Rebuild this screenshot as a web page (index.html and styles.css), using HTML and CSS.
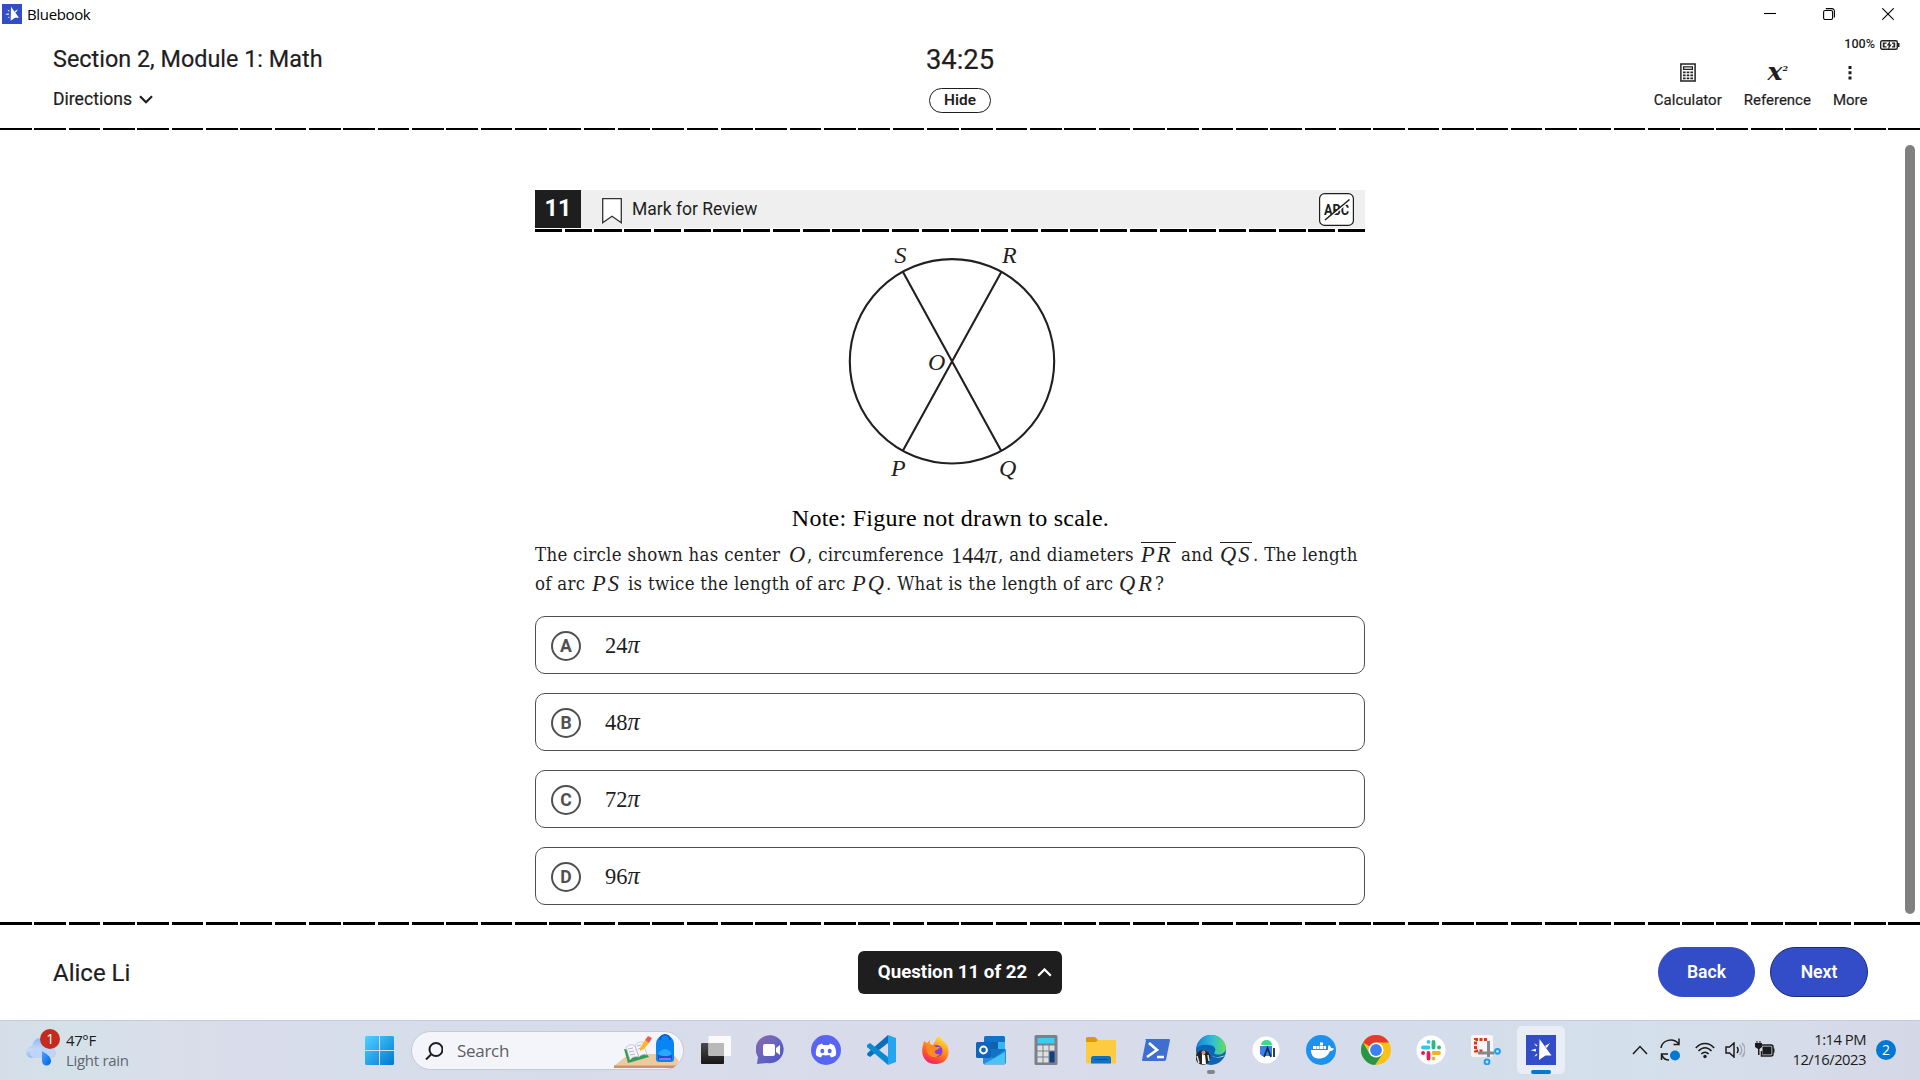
FILE: index.html
```html
<!DOCTYPE html>
<html lang="en">
<head>
<meta charset="utf-8">
<title>Bluebook</title>
<link rel="stylesheet" href="styles.css">
</head>
<body>
<div class="titlebar">
  <svg class="app-icon" viewBox="0 0 30 30"><rect width="30" height="30" fill="#324dc7"/><path d="M13.500 4l12 16.500h-6L13 25zM4.500 15.200l5.500-1.400v2.800zM7.800 8.300l3.700 2-1 1.200zM24 8l-3.300 5-1.700-2zM8 21.800l2.500-3 1 1.200z" fill="#fff"/></svg>
  <span class="app-name">Bluebook</span>
  <div class="window-buttons">
    <svg viewBox="0 0 12 12"><path d="M0 5.500h12"/></svg>
    <svg viewBox="0 0 12 12"><rect x=".6" y="2.500" width="9" height="9" rx="1.500"/><path d="M2.800.6H9a2.400 2.400 0 0 1 2.400 2.400v6.500"/></svg>
    <svg viewBox="0 0 12 12"><path d="M.3.3l11.400 11.400M11.700.3L.3 11.700"/></svg>
  </div>
</div>

<header class="header">
  <div class="header-left">
    <h1>Section 2, Module 1: Math</h1>
    <div class="directions">Directions <svg viewBox="0 0 14 9"><path d="M1 1.200l6 6 6-6"/></svg></div>
  </div>
  <div class="header-center">
    <div class="timer">34:25</div>
    <button class="hide">Hide</button>
  </div>
  <div class="header-right">
    <div class="power"><span>100%</span>
      <svg viewBox="0 0 20 10"><rect x=".7" y=".7" width="16.600" height="8.600" rx="1.500" fill="none" stroke="#222" stroke-width="1.400"/><path d="M18 3h1.500v4H18z" fill="#222"/><path d="M2.800 2.500h3.700v1.200H4.500v2.600h2v1.200H2.800zM12 2.500h3.200v5H12V6.300h1.500V3.700H12zM10.500 0L6.800 5.500h2L7.900 10l3.900-5.500H9.700z" fill="#222"/></svg>
    </div>
    <div class="tools">
      <div class="tool calc"><svg width="16" height="19" viewBox="0 0 16 19"><path d="M.9.9h14.200v17.200H.9z" fill="none" stroke="#222" stroke-width="1.500"/><path d="M3.600 3.800h8.800v2.500H3.600z" fill="none" stroke="#222" stroke-width="1.300"/><path d="M3 9.300h10M3 12.300h10M3 15.300h10" stroke="#222" stroke-width="1.700" stroke-dasharray="2.600 1.100"/></svg><span>Calculator</span></div>
      <div class="tool ref"><div class="xsq">x<sup>2</sup></div><span>Reference</span></div>
      <div class="tool more"><svg width="4" height="14" viewBox="0 0 4 14"><path d="M.5 0h3v3h-3zM.5 5.200h3v3h-3zM.5 10.400h3v3h-3z" fill="#1e1e1e"/></svg><span>More</span></div>
    </div>
  </div>
</header>
<svg class="rule rule-top" viewBox="0 0 1920 2"><path d="M0 1H1920"/></svg>

<main class="main">
  <article class="question">
    <div class="qbar">
      <div class="qnum">11</div>
      <svg class="bookmark" viewBox="0 0 20 26"><path d="M.7.700h18.600v24L10 18.200.700 24.700z"/></svg>
      <span class="mark">Mark for Review</span>
      <svg class="abc" viewBox="0 0 35 33"><rect x=".6" y=".6" width="33.800" height="31.800" rx="5" fill="#fff" stroke="#1e1e1e" stroke-width="1.200"/><text x="5" y="21.500" textLength="25" lengthAdjust="spacingAndGlyphs">ABC</text><path d="M7 27.500L31 7.500" stroke="#fff" stroke-width="2"/><path d="M6 27L30.500 6.500" stroke="#1e1e1e" stroke-width="1.500"/></svg>
    </div>
    <svg class="rule rule-card" viewBox="0 0 830 3"><path d="M0 1.500H830"/></svg>

    <svg class="figure" viewBox="535 232 830 260">
      <g fill="none" stroke="#231f20" stroke-width="2.100"><circle cx="952" cy="361.300" r="102.200"/><path d="M903 272l98 178.500M1001.300 272L903 450.500"/></g>
      <g class="labels"><text x="894.500" y="263">S</text><text x="1002" y="263">R</text><text x="928" y="370">O</text><text x="891" y="475.500">P</text><text x="999" y="475.500">Q</text></g>
    </svg>
    <p class="note">Note: Figure not drawn to scale.</p>
    <p class="stem">
      <span class="line"><span class="w254">The circle shown has center</span><i class="m w18">O</i><span class="w144">, circumference</span><span class="m w47">144<i class="pi">π</i></span><span class="w143">, and diameters</span><i class="m seg w40">PR</i><span class="w39">and</span><i class="m seg qs w32">QS</i><span>. The length</span></span>
      <span class="line"><span class="w57">of arc</span><i class="m w36">PS</i><span class="w224">is twice the length of arc</span><i class="m w33">PQ</i><span class="w234">. What is the length of arc</span><i class="m qr w37">QR</i><span>?</span></span>
    </p>
    <div class="choices">
      <div class="choice"><b>A</b><span>24<i class="pi">π</i></span></div>
      <div class="choice"><b>B</b><span>48<i class="pi">π</i></span></div>
      <div class="choice"><b>C</b><span>72<i class="pi">π</i></span></div>
      <div class="choice"><b>D</b><span>96<i class="pi">π</i></span></div>
    </div>
  </article>
  <div class="scrollbar"></div>
</main>
<svg class="rule rule-bottom" viewBox="0 0 1920 3"><path d="M0 1.500H1920"/></svg>

<footer class="footer">
  <span class="student">Alice Li</span>
  <button class="navigator"><span>Question 11 of 22</span> <svg viewBox="0 0 15 9"><path d="M1.200 7.800l6.300-6.300 6.300 6.300"/></svg></button>
  <div class="nav"><button>Back</button><button class="next">Next</button></div>
</footer>

<div class="taskbar">
  <div class="weather">
    <svg viewBox="0 0 36 38">
      <defs><linearGradient id="cl" x2="0" y2="1"><stop stop-color="#8db8f7"/><stop offset=".6" stop-color="#c9dbf8"/><stop offset="1" stop-color="#8fb3ef"/></linearGradient><linearGradient id="dr" x2="1" y2="1"><stop stop-color="#4aa5ff"/><stop offset="1" stop-color="#005fe8"/></linearGradient></defs>
      <path d="M6 29a6 6 0 0 1 0-12c1-5 4-8 9-8s8 3 9 8a6 6 0 0 1 0 12z" fill="url(#cl)"/><path d="M7 29a5 5 0 0 1 0-9c3-1 5 0 7 2 1-3 4-5 8-4 9 0 9 11 2 11z" fill="#bfd4f7"/>
      <path d="M16 22c5 3 9 6 9 10a4.500 4.500 0 0 1-9 0z" fill="url(#dr)"/><circle cx="24" cy="10" r="10" fill="#c42b1c"/><text x="24" y="15" text-anchor="middle" font-size="14" fill="#fff">1</text>
    </svg>
    <div><div class="temp">47°F</div><div class="cond">Light rain</div></div>
  </div>
  <svg class="start" viewBox="0 0 29 29"><defs><linearGradient id="wn" x2="1" y2="1"><stop stop-color="#4fd2ff"/><stop offset="1" stop-color="#0078d4"/></linearGradient></defs><path d="M1 0h13v14H0V1zM15 0h13l1 1v13H15zM0 15h14v14H1l-1-1zM15 15h14v13l-1 1H15z" fill="url(#wn)"/></svg>
  <div class="search">
    <svg class="glass" viewBox="0 0 18 18"><circle cx="11" cy="7.500" r="6.500"/><path d="M6.500 12L1 17.500"/></svg>
    <span>Search</span>
    <svg class="desk" viewBox="0 0 66 36">
      <path d="M0 32l15-12h44l6 7-3 5z" fill="#edc9a0"/><path d="M0 31.500h62l-3 2.500H0z" fill="#c69568"/>
      <path d="M10 15l4 14 21-6-3-4z" fill="#2f9e55"/><path d="M12 13c4-3 7-3 9-1 2-4 5-4 8-4l4 13c-4-1-6 0-8 2-4-1-7 0-9 3z" fill="#f5f4fb" stroke="#bbb8cc" stroke-width=".7"/><path d="M21 12l4 11M14 15l5-1M15 18l5-1M16 21l5-1M23 12l4-1M24 15l4-1" stroke="#a9a6bb" stroke-width=".8"/>
      <path d="M26 14l5-8 4 3-5 6-4 2z" fill="#ffb629"/><path d="M31 6l3-4 4 2-3 5z" fill="#f25b4a"/>
      <path d="M42 10c0-5 4-9 9-9s9 4 9 9v15c0 2-1 3-3 3H45c-2 0-3-1-3-3z" fill="#0884f4"/><path d="M46 6c0-7 10-7 10 0" fill="none" stroke="#0756b7" stroke-width="1.500"/><path d="M44 22c0-9 14-9 14 0z" fill="#27a9ff"/><path d="M44 20c3 3 11 3 14 0v6H44z" fill="#214fc9"/><path d="M45 25h12" stroke="#b77cff" stroke-width="1.500"/>
    </svg>
  </div>
  <div class="apps">
    <svg viewBox="0 0 30 30"><defs><linearGradient id="tv" x2="0" y2="1"><stop stop-color="#4a4a4a"/><stop offset="1" stop-color="#171717"/></linearGradient></defs><rect y="8" width="23" height="21" rx="1" fill="url(#tv)"/><rect x="7.500" y="1" width="22.500" height="20" rx="1" fill="#fafafa"/><path d="M7.500 8H23v13H8.500l-1-1z" fill="#b9b9b9"/></svg>
    <svg viewBox="0 0 30 30"><defs><linearGradient id="ch" x2="1" y2="1"><stop stop-color="#9068a8"/><stop offset=".5" stop-color="#6664c2"/><stop offset="1" stop-color="#4b53bc"/></linearGradient></defs><path d="M1 29l1-7a14 14 0 1 1 9 6z" fill="url(#ch)"/><rect x="7" y="9" width="12" height="12" rx="2" fill="#fff"/><path d="M20 13l4-3v10l-4-3z" fill="#fff"/></svg>
    <svg viewBox="0 0 30 30"><circle cx="15" cy="15" r="15" fill="#5865f2"/><path d="M11 8.500l-4 1.700c-2 3.300-2.500 6.500-2 10 2 1.500 3.500 2 5 2l1.500-2.200c2 .6 5 .6 7 0l1.500 2.200c1.500 0 3-.5 5-2 .5-3.500 0-6.700-2-10l-4-1.700-1 1.500h-6z" fill="#fff"/><ellipse cx="11.300" cy="16" rx="2" ry="2.200" fill="#5865f2"/><ellipse cx="18.700" cy="16" rx="2" ry="2.200" fill="#5865f2"/></svg>
    <svg viewBox="0 0 30 30"><path d="M1 20l3 2L22 8V0L1.500 18z" fill="#0e6fb8"/><path d="M1 10l3-2 18 14v8L1 12z" fill="#0b8ad4"/><path d="M22 0l8 3v24l-8 3z" fill="#26a5ef"/></svg>
    <svg viewBox="0 0 30 30"><defs><linearGradient id="ff" x1=".8" y1="0" x2=".3" y2="1"><stop stop-color="#fff04a"/><stop offset=".4" stop-color="#ff9a1f"/><stop offset=".75" stop-color="#ff4f2f"/><stop offset="1" stop-color="#f0197c"/></linearGradient></defs><path d="M2 10l1-4 3 2 3-3v4l3 1 5-9c3 2 5 4 6 6l2 1c5 8 3 20-9 21C4 30-1 20 2 10z" fill="url(#ff)"/><circle cx="15.500" cy="16" r="6" fill="#8241d8"/><path d="M5 11c4-2 8-1 10 1l4 0c-1 3-4 2-5 4s2 4 5 3c-3 5-12 4-13-3z" fill="#ff8a22"/></svg>
    <svg viewBox="0 0 30 30"><rect x="8" y="1" width="21" height="26" rx="1.500" fill="#1073c8"/><path d="M15 7h7v7h-7z" fill="#1261ad"/><path d="M22 7h7v7h-7z" fill="#35b8f1"/><path d="M7 18l11 5 12-9v14l-1.500 1.500H8L7 28z" fill="#238ee0"/><path d="M8 29l21-12v12z" fill="#49c4f4"/><rect y="7" width="15" height="16" rx="1.500" fill="#0f64bd"/><circle cx="7.500" cy="15" r="3.400" fill="none" stroke="#fff" stroke-width="2"/></svg>
    <svg viewBox="0 0 30 30"><rect x="3.500" width="23" height="30" rx="1.500" fill="#78818c"/><rect x="6.500" y="3" width="17" height="5.500" fill="#35cff3"/><path d="M6.500 10.500h5v5h-5zM12.500 10.500h5v5h-5zM18.500 10.500h5v5h-5zM6.500 16.500h5v5h-5zM12.500 16.500h5v5h-5zM6.500 22.500h5v5h-5zM12.500 22.500h5v5h-5z" fill="#dedede"/><path d="M18.500 16.500h5v11h-5z" fill="#123f84"/></svg>
    <svg viewBox="0 0 30 30"><path d="M0 3l1-1h8l3 3h17v9H0z" fill="#dc9b08"/><path d="M0 7h10l2-2h17l1 1v22l-1 .5H1l-1-1z" fill="#ffcb3e"/><path d="M5 28.500v-6L6.500 21h17l1.500 1.500v6z" fill="#0d72c8"/><path d="M8.500 24.500h13" stroke="#084f91"/></svg>
    <svg viewBox="0 0 30 30"><path d="M4 4h24c1 0 1 1 1 1l-4 20-1.500 1H2c-1 0-1-1-1-1L5 5z" fill="#3e6fd0"/><path d="M8 8l8 7-10 7M16 22h7" fill="none" stroke="#fff" stroke-width="2.600"/></svg>
    <div class="running"><svg viewBox="0 0 30 30"><defs><linearGradient id="ed" x2="1"><stop stop-color="#1683d9"/><stop offset=".55" stop-color="#2fc1d4"/><stop offset="1" stop-color="#65dc54"/></linearGradient></defs><circle cx="15" cy="15" r="15" fill="#0c64b5"/><path d="M1 13C2 4 8 0 15 0c9 0 15 7 15 13 0 7-10 8-12 5 3-3 1-8-5-8-6-1-10 1-12 3z" fill="url(#ed)"/><path d="M14 15c-1 7 7 9 15 5-1 1-2 2-3 2-8 2-13-2-12-7z" fill="#dce2ee"/><circle cx="7" cy="22.500" r="7.300" fill="#262324"/><path d="M6 19l3 1 1 9-4 0z" fill="#fff"/><circle cx="7.500" cy="17.500" r="2" fill="#c49683"/><path d="M1 21l2 7M12 20l1 6" stroke="#ddd" stroke-width="1.500"/></svg></div>
    <svg viewBox="0 0 30 30"><circle cx="15" cy="15" r="13.500" fill="#fff"/><path d="M10 10a5.500 5 0 0 1 11 0z" fill="#3ddc84"/><path d="M9 11h12v10H11l-2-2z" fill="#3f7ef0"/><path d="M13 22l3.500-9 3.500 9M23 13v9" stroke="#0b3242" stroke-width="1.800" fill="none"/></svg>
    <svg viewBox="0 0 30 30"><circle cx="15" cy="15" r="15" fill="#1d91ee"/><path d="M5 15h17c0-3 0-4 1-5 1 1 2 2 2 3l3 .5c-1 2-2 2.500-4 2.500-2 5-6 7.500-11 7.500S5 21 5 15z" fill="#fff"/><path d="M7 11h3v3H7zM10.500 11h3v3h-3zM14 11h3v3h-3zM17.500 11H20v3h-2.500zM14 7.500h3v3h-3z" fill="#fff"/></svg>
    <svg viewBox="0 0 30 30"><circle cx="15" cy="15" r="15" fill="#fbc116"/><path d="M15 15L2 7.500A15 15 0 0 1 28 7.500H15z" fill="#e33b2e"/><path d="M2 7.500A15 15 0 0 0 14 30l7.500-11L15 15 8.500 18.500z" fill="#27964b"/><circle cx="15" cy="15" r="7.500" fill="#fff"/><circle cx="15" cy="15" r="5.900" fill="#3b82f0"/></svg>
    <svg viewBox="0 0 30 30"><circle cx="15" cy="15" r="14.500" fill="#fff"/><g fill="none" stroke-width="3.800" stroke-linecap="round"><path d="M7 12.500h5.500M12.500 6.800v.1" stroke="#36c5f0"/><path d="M17.500 6.800v5.700M23 12.500h.1" stroke="#2eb67d"/><path d="M17.500 18H23M17.500 23.500v.1" stroke="#ecb22e"/><path d="M12.500 18v5.500M7 18h.1" stroke="#e01e5a"/></g></svg>
    <svg viewBox="0 0 30 30"><rect width="22" height="22" rx="2" fill="#f7f7f8"/><path d="M16 4.500H4.500V16H12" fill="none" stroke="#d83b16" stroke-width="3" stroke-dasharray="3 1.500"/><path d="M17.500 6v16M7 18h16" stroke="#85898f" stroke-width="3"/><circle cx="26.500" cy="16.300" r="2.400" fill="none" stroke="#1ca0e8" stroke-width="2"/><circle cx="16" cy="27" r="2.400" fill="none" stroke="#1ca0e8" stroke-width="2"/></svg>
    <div class="active"><svg viewBox="0 0 30 30"><rect width="30" height="30" fill="#324dc7"/><path d="M13.500 4l12 16.500h-6L13 25zM4.500 15.200l5.500-1.400v2.800zM7.800 8.300l3.700 2-1 1.200zM24 8l-3.300 5-1.700-2zM8 21.800l2.500-3 1 1.200z" fill="#fff"/></svg></div>
  </div>
  <div class="tray">
    <svg class="t-chev" viewBox="0 0 16 10"><path d="M1 9l7-7.500L15 9"/></svg>
    <svg class="t-sync" viewBox="0 0 22 24"><path d="M1 10C2 2 13-1 19 6M19 .5V6.500h-5.500M9 22C6 22 3 20 2 17M1.500 22v-6H8"/><circle cx="15" cy="17.500" r="5" fill="#0078d4" stroke="none"/></svg>
    <svg class="t-wifi" viewBox="0 0 20 17"><path d="M.8 6c5-6 13.400-6 18.400 0M3.500 9c4-4.500 9-4.500 13 0M6.300 12c2.400-2.500 5-2.500 7.400 0"/><circle cx="10" cy="14.500" r="1.700" fill="#1b1b1b" stroke="none"/></svg>
    <svg class="t-vol" viewBox="0 0 20 16"><path d="M1 5h3.500L9 1v14l-4.500-4H1zM12 5c1.500 2 1.500 4 0 6"/><path d="M14.500 3c3 3 3 7 0 10M17 1c4 4 4 10 0 14" stroke="#a4aab4"/></svg>
    <svg class="t-bat" viewBox="0 0 20 17"><path d="M7 4h9a2 2 0 0 1 2 2v7a2 2 0 0 1-2 2H6.500v-5"/><path d="M7.500 5.500H16.500v8h-9z" fill="#1b1b1b" stroke="none"/><path d="M18 7.500h1.500v4H18zM0 2h1.500V0h1v2h2V0h1v2H7v4L4.500 8v6H3V8L0 6z" fill="#1b1b1b" stroke="none"/></svg>
    <div class="clock"><div>1:14 PM</div><div>12/16/2023</div></div>
    <span class="count">2</span>
  </div>
</div>
</body>
</html>
```
FILE: styles.css
```css
* { box-sizing: border-box; }
body {
  margin: 0;
  width: 1920px;
  height: 1080px;
  overflow: hidden;
  display: flex;
  flex-direction: column;
  background: #fff;
  color: #1e1e1e;
  font-family: Roboto, "Liberation Sans", sans-serif;
}
svg { display: block; flex: none; }
button { font-family: inherit; padding: 0; margin: 0; white-space: nowrap; }
h1, p { margin: 0; font-weight: 400; }

/* window title bar */
.titlebar { height: 28px; flex: none; display: flex; align-items: center; padding: 0 26px 0 2px; }
.app-icon { width: 20px; height: 20px; }
.app-name { margin-left: 5px; font: 15px/20px "Open Sans", "Noto Sans", sans-serif; color: #000; letter-spacing: -.35px; }
.window-buttons { margin-left: auto; display: flex; gap: 47px; }
.window-buttons svg { width: 12px; height: 12px; fill: none; stroke: #000; stroke-width: 1.1; }

/* exam header */
.header { height: 100px; flex: none; display: grid; grid-template-columns: 1fr 200px 1fr; padding: 0 20px 0 53px; }
.header-left { padding-top: 16px; }
h1 { font-size: 23.400px; line-height: 30px; font-weight: 450; white-space: nowrap; -webkit-text-stroke: .2px #1e1e1e; }
.directions { margin-top: 15px; font-size: 17.6px; line-height: 20px; font-weight: 450; display: flex; align-items: center; gap: 7px; -webkit-text-stroke: .2px #1e1e1e; }
.directions svg { width: 14px; height: 9px; fill: none; stroke: #1e1e1e; stroke-width: 2.2; }
.header-center { padding: 17px 0 0; margin-left: -49.500px; width: 266px; display: flex; flex-direction: column; align-items: center; }
.timer { font-size: 27.400px; line-height: 30px; font-weight: 450; -webkit-text-stroke: .2px #1e1e1e; }
.hide { margin-top: 13px; width: 62px; height: 25px; border: 1px solid #1e1e1e; border-radius: 13px; background: #fff; color: #1e1e1e; font-size: 15.4px; line-height: 20px; padding-bottom: 2px; font-weight: 600; }
.header-right { display: flex; flex-direction: column; padding-top: 9px; }
.power { height: 14px; display: flex; gap: 5px; justify-content: flex-end; align-items: center; font-size: 12.600px; line-height: 14px; font-weight: 500; }
.power svg { width: 20px; height: 10px; margin-top: 1px; }
.tools { margin-top: 9px; padding-right: 32.500px; display: flex; justify-content: flex-end; gap: 22px; }
.tool { display: flex; flex-direction: column; align-items: center; height: 50px; justify-content: space-between; font-size: 15px; line-height: 20px; font-weight: 450; -webkit-text-stroke: .2px #1e1e1e; }
.tool > svg { margin-top: 3px; }
.tool.more > svg { margin-top: 6px; }
.xsq { font: italic bold 25px/24px "DejaVu Serif", serif; height: 24px; display: flex; padding-left: 1px; -webkit-text-stroke: 0; }
.xsq sup { font-size: 8px; line-height: 16px; margin-top: 0; }

/* dashed rules */
.rule path { fill: none; stroke: #000; stroke-dasharray: 31.8 2.530; shape-rendering: crispEdges; }
.rule-top { width: 1920px; height: 2px; }
.rule-top path { stroke-width: 2; }
.rule-bottom { width: 1920px; height: 3px; }
.rule-bottom path { stroke-width: 3; }
.rule-card { width: 830px; height: 3px; margin-top: 1px; }
.rule-card path { stroke-width: 3; stroke-dasharray: 27.200 2.540; }

/* question */
.main { height: 792px; flex: none; display: flex; justify-content: space-between; padding: 15px 5px 0 535px; }
.question { width: 830px; padding-top: 45px; }
.scrollbar { width: 10px; height: 769px; border-radius: 5px; background: #808080; }
.qbar { height: 38px; background: #efefef; display: flex; align-items: flex-start; }
.qnum { width: 46px; height: 38px; background: #1e1e1e; color: #fff; font-size: 23.5px; line-height: 36px; font-weight: 700; text-align: center; }
.bookmark { width: 20px; height: 26px; margin: 8px 10px 0 21px; }
.bookmark path { fill: #fff; stroke: #333; stroke-width: 1.300; }
.mark { font-size: 17.500px; line-height: 38px; font-weight: 400; }
.abc { width: 35px; height: 33px; margin: 3px 11px 0 auto; }
.abc text { font: bold 14px Roboto, sans-serif; fill: #1e1e1e; }
.figure { width: 830px; height: 260px; }
.labels { font: italic 24px "Liberation Serif", serif; fill: #231f20; }
.note { margin-top: 12px; padding-left: 1px; text-align: center; color: #000; font: 24px/28px "Liberation Serif", serif; letter-spacing: .25px; }
.stem { margin-top: 8px; font-family: "DejaVu Serif Condensed", "DejaVu Serif", serif; font-stretch: condensed; font-size: 18.500px; letter-spacing: .28px; line-height: 29px; }
.line { display: flex; white-space: nowrap; height: 29px; }
.line > span, .line > i { flex: none; }
.m, .choice span { font-family: "Liberation Serif", serif; font-size: 22.500px; letter-spacing: 0; }
i.m { letter-spacing: 2px; }
i.qr { letter-spacing: 3px; }
.pi { font-size: 24.500px; }
.seg::before { content: ""; display: block; width: 35px; height: 1px; background: #1e1e1e; margin: 2px 0 -3px; }
.qs::before { width: 32px; }
i.qs { letter-spacing: 2px; }
.w18 { width: 18px; } .w32 { width: 33px; } .w33 { width: 34px; } .w36 { width: 36px; } .w37 { width: 36px; } .w39 { width: 39px; } .w40 { width: 40px; }
.w47 { width: 47px; } .w57 { width: 57px; } .w144 { width: 144px; } .w143 { width: 143px; } .w224 { width: 224px; } .w234 { width: 233px; } .w254 { width: 254px; }
.choices { margin-top: 18px; display: flex; flex-direction: column; gap: 19px; }
.choice { height: 58px; border: 1px solid #505050; border-radius: 10px; display: flex; align-items: center; padding-left: 15px; }
.choice b { width: 30px; height: 30px; margin-top: 2px; border: 2px solid #505050; border-radius: 50%; color: #505050; font-size: 17.600px; line-height: 27px; text-align: center; }
.choice span { margin-left: 24px; line-height: 28px; height: 28px; }

/* exam footer */
.footer { height: 95px; flex: none; display: grid; grid-template-columns: 1fr 204px 1fr; padding: 0 53px; }
.student { font-size: 24px; line-height: 30px; font-weight: 450; padding-top: 33px; -webkit-text-stroke: .2px #1e1e1e; }
.navigator { margin: 26px 0 0; height: 43px; border: 0; border-radius: 6px; background: #1e1e1e; color: #fff; display: flex; align-items: center; gap: 9px; padding: 0 0 2px 19px; font-size: 18.700px; font-weight: 700; }
.navigator span { width: 151px; }
.navigator svg { width: 15px; height: 9px; margin-top: 2px; fill: none; stroke: #fff; stroke-width: 2.300; }
.nav { display: flex; justify-content: flex-end; gap: 15px; padding-top: 22px; margin-right: -1px; }
.nav button { width: 97px; height: 50px; border-radius: 25px; border: 1px solid #324dc7; background: #324dc7; color: #fff; font-size: 17.600px; font-weight: 650; }
.nav .next { width: 98px; border-color: #1c2b70; }

/* taskbar */
.taskbar { height: 60px; flex: none; display: flex; border-top: 1px solid #c6ccda; background: linear-gradient(90deg, #d5dde9 0, #d4e1e9 60px, #dadcea 220px, #d6ddeb 340px, #d9dbea 900px, #d5dceb 1350px, #d3e0eb 1620px, #d6dce9 1800px, #d5d7e7); font-family: "Open Sans", "Noto Sans", sans-serif; }
.weather { width: 339px; padding: 8px 0 0 26px; display: flex; gap: 4px; font-size: 15px; line-height: 20px; color: #1b1b1b; letter-spacing: -.4px; }
.weather svg { width: 36px; height: 38px; }
.temp { margin-top: 1px; }
.cond { color: #5f6670; letter-spacing: -.3px; }
.start { width: 29px; height: 29px; margin: 15px 18px 0 26px; }
.search { width: 273px; height: 39px; margin: 10px 3px 0 -1px; border: 1px solid #c4c9d6; border-radius: 20px; background: #f3f5fa; display: flex; align-items: center; padding-left: 13px; font-size: 17px; color: #5c5f63; letter-spacing: -.3px; }
.glass { width: 18px; height: 18px; margin-right: 14px; fill: none; stroke: #1e1e1e; stroke-width: 2; }
.desk { width: 66px; height: 36px; margin: 3px 3px 0 auto; }
.apps { width: 881px; padding-left: 1px; display: grid; grid-template-columns: repeat(16, 55px); justify-items: center; padding-top: 14px; }
.apps svg { width: 30px; height: 30px; }
.running, .active { display: flex; flex-direction: column; align-items: center; }
.running::after, .active::after { content: ""; width: 8px; height: 4px; margin-top: 5px; border-radius: 2px; background: #80848c; }
.active { width: 48px; height: 48px; margin-top: -9px; border-radius: 5px; background: #e9edf6; padding-top: 9px; }
.active::after { width: 20px; background: #0078d4; }
.tray { flex: 1; display: flex; align-items: flex-start; padding-top: 14px; }
.tray > svg { fill: none; stroke: #1b1b1b; stroke-width: 1.500; }
.t-chev { width: 16px; height: 10px; margin: 10px 12px 0 64px; }
.t-sync { width: 22px; height: 24px; margin: 3px 13px 0 0; }
.t-wifi { width: 20px; height: 17px; margin: 7px 10px 0 0; }
.t-vol { width: 20px; height: 16px; margin: 7px 10px 0 0; }
.t-bat { width: 20px; height: 17px; margin-top: 6px; }
.clock { width: 91px; margin-top: -6px; text-align: right; font-size: 14.800px; line-height: 20px; letter-spacing: -.5px; color: #1b1b1b; white-space: nowrap; }
.count { width: 20px; height: 20px; margin: 5px 0 0 10px; border-radius: 50%; background: #0078d4; color: #fff; font-size: 14px; line-height: 20px; text-align: center; }
```
